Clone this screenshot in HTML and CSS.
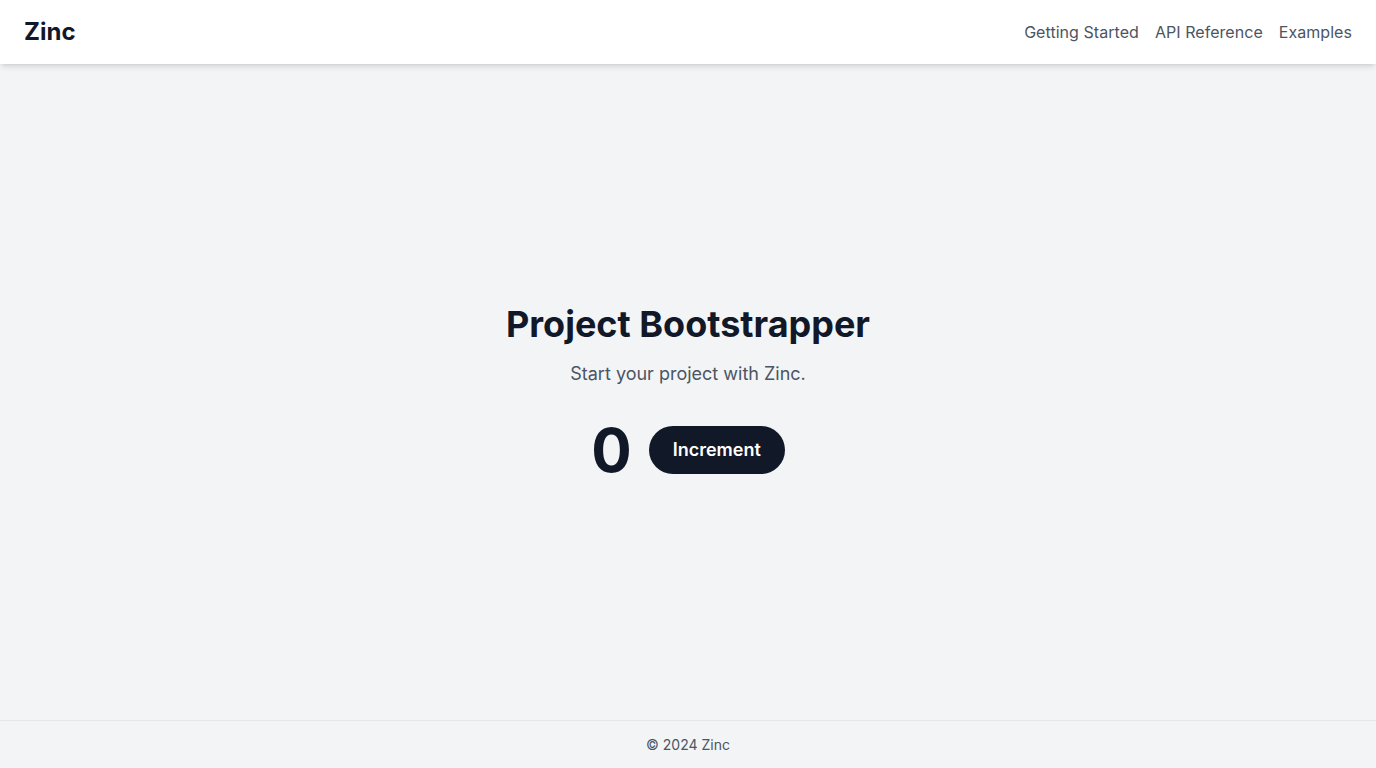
FILE: index.html
```html
<!DOCTYPE html>
<html lang="en">
<head>
<meta charset="utf-8">
<title>Zinc</title>
<link rel="stylesheet" href="styles.css">
</head>
<body>
<div class="page">
  <header class="header">
    <div class="logo">Zinc</div>
    <nav class="nav">
      <a href="#">Getting Started</a>
      <a href="#">API Reference</a>
      <a href="#">Examples</a>
    </nav>
  </header>
  <main class="main">
    <h1 class="title">Project Bootstrapper</h1>
    <p class="subtitle">Start your project with Zinc.</p>
    <div class="counter-row">
      <span class="count">0</span>
      <button class="btn">Increment</button>
    </div>
  </main>
  <footer class="footer">© 2024 Zinc</footer>
</div>
</body>
</html>
```

FILE: styles.css
```css
* { box-sizing: border-box; }
html, body { margin: 0; padding: 0; }
body {
  font-family: Inter, "Noto Sans", sans-serif;
  background: #f3f4f6;
  color: #111827;
}
.page {
  min-height: 768px;
  display: flex;
  flex-direction: column;
}
.header {
  height: 64px;
  background: #ffffff;
  box-shadow: 0 4px 6px -1px rgba(0,0,0,0.1), 0 2px 4px -2px rgba(0,0,0,0.1);
  display: flex;
  align-items: center;
  justify-content: space-between;
  padding: 0 24px;
  position: relative;
  z-index: 1;
}
.logo {
  font-size: 24px;
  font-weight: 700;
  line-height: 32px;
  color: #111827;
}
.nav {
  display: flex;
  gap: 16px;
}
.nav a {
  color: #4b5563;
  text-decoration: none;
  font-size: 16px;
  line-height: 24px;
  letter-spacing: 0.05px;
}
.main {
  flex: 1;
  display: flex;
  flex-direction: column;
  align-items: center;
  justify-content: center;
}
.title {
  margin: 0 0 16px;
  font-size: 36px;
  line-height: 40px;
  font-weight: 700;
  color: #111827;
}
.subtitle {
  margin: 0 0 32px;
  font-size: 18px;
  line-height: 28px;
  color: #4b5563;
}
.counter-row {
  display: flex;
  align-items: center;
  gap: 17px;
}
.count {
  font-size: 60px;
  line-height: 60px;
  font-weight: 700;
  color: #111827;
}
.btn {
  background: #111827;
  color: #ffffff;
  border: none;
  border-radius: 9999px;
  padding: 0 24px 1px;
  height: 48px;
  font-family: inherit;
  font-size: 18px;
  font-weight: 600;
  cursor: pointer;
}
.footer {
  height: 48px;
  border-top: 1px solid #e5e7eb;
  display: flex;
  align-items: center;
  justify-content: center;
  font-size: 14px;
  color: #4b5563;
}
```
